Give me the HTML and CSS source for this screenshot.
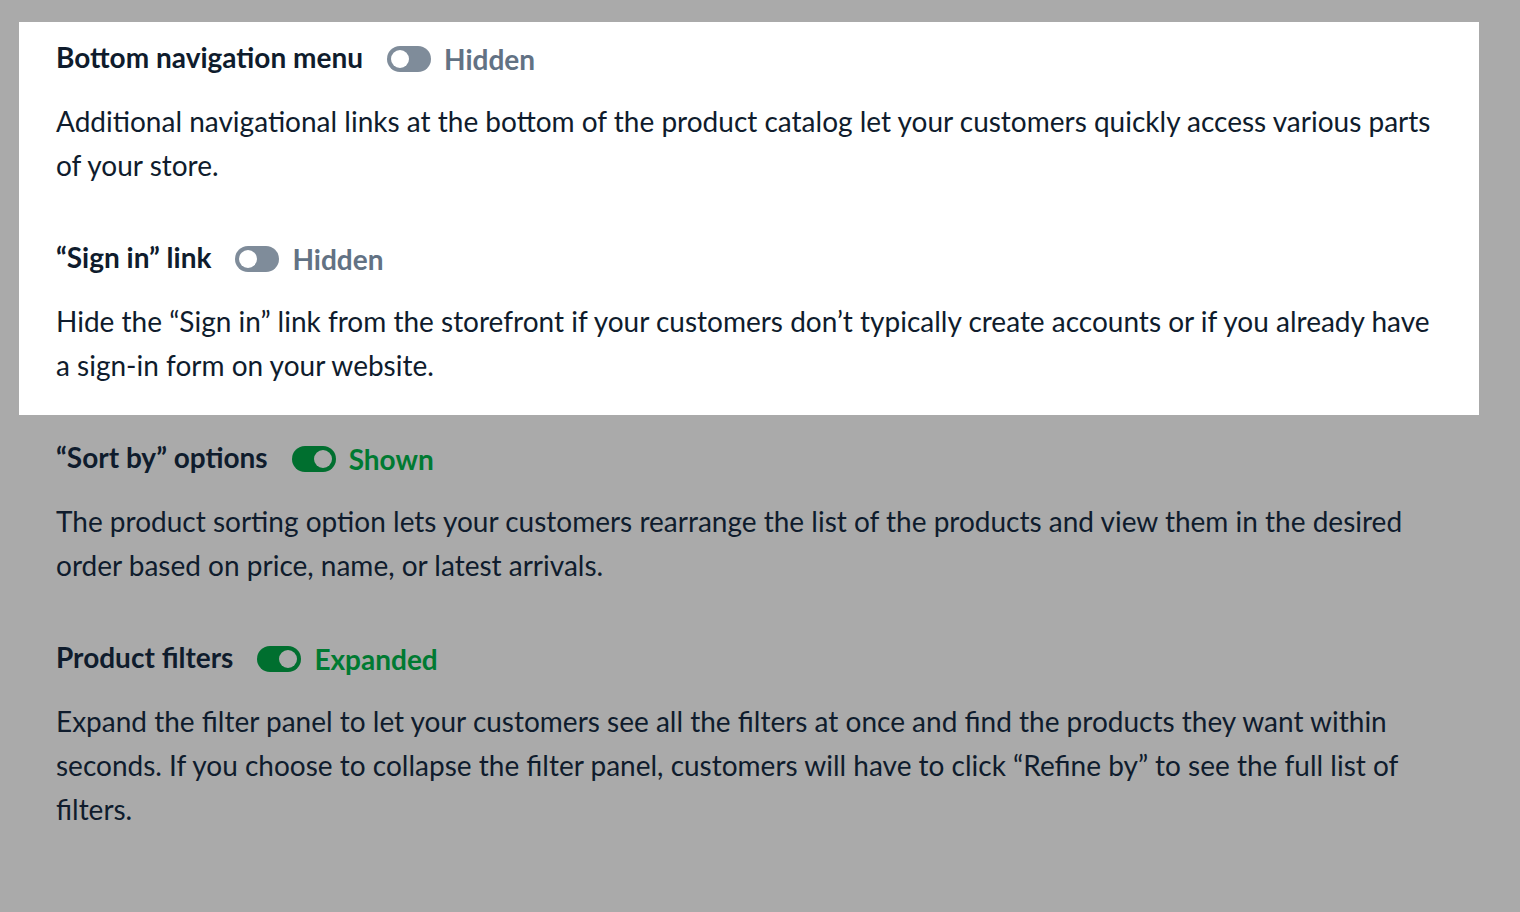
FILE: index.html
```html
<!DOCTYPE html>
<html lang="en">
<head>
    <meta charset="UTF-8">
    <meta name="viewport" content="width=device-width, initial-scale=1.0">
    <title>Storefront settings</title>
    <link rel="stylesheet" href="styles.css">
</head>
<body>
    <div class="page">
        <div class="panel">
            <div class="setting">
                <div class="setting-head">
                    <span class="setting-title">Bottom navigation menu</span>
                    <span class="toggle off"><span class="knob"></span></span>
                    <span class="state off">Hidden</span>
                </div>
                <p class="setting-text">Additional navigational links at the bottom of the product catalog let your customers quickly access various parts of your store.</p>
            </div>
            <div class="setting">
                <div class="setting-head">
                    <span class="setting-title">“Sign in” link</span>
                    <span class="toggle off"><span class="knob"></span></span>
                    <span class="state off">Hidden</span>
                </div>
                <p class="setting-text">Hide the “Sign in” link from the storefront if your customers don’t typically create accounts or if you already have a sign-in form on your website.</p>
            </div>
        </div>
        <div class="dimmed">
            <div class="setting">
                <div class="setting-head">
                    <span class="setting-title">“Sort by” options</span>
                    <span class="toggle on"><span class="knob"></span></span>
                    <span class="state on">Shown</span>
                </div>
                <p class="setting-text">The product sorting option lets your customers rearrange the list of the products and view them in the desired order based on price, name, or latest arrivals.</p>
            </div>
            <div class="setting">
                <div class="setting-head">
                    <span class="setting-title">Product filters</span>
                    <span class="toggle on"><span class="knob"></span></span>
                    <span class="state on">Expanded</span>
                </div>
                <p class="setting-text">Expand the filter panel to let your customers see all the filters at once and find the products they want within seconds. If you choose to collapse the filter panel, customers will have to click “Refine by” to see the full list of filters.</p>
            </div>
        </div>
    </div>
</body>
</html>
```

FILE: styles.css
```css
html, body {
    margin: 0;
    padding: 0;
    background: #aaaaaa;
}
body {
    font-family: Lato, "Noto Sans", sans-serif;
    color: #0f1c2d;
    -webkit-font-smoothing: antialiased;
}
.page {
    padding-top: 22px;
    padding-left: 19px;
    width: 1460px;
}
.panel {
    background: #ffffff;
    padding: 17px 37px 28px 37px;
}
.dimmed {
    padding: 24px 37px 0 37px;
}
.setting + .setting {
    margin-top: 52px;
}
.setting-head {
    display: flex;
    align-items: center;
    height: 36px;
}
.setting-title {
    font-size: 28px;
    font-weight: 700;
    margin-right: 24px;
}
.toggle {
    display: inline-flex;
    align-items: center;
    width: 44px;
    height: 26px;
    border-radius: 13px;
    padding: 0 4px;
    box-sizing: border-box;
    margin-top: 4px;
}
.toggle .knob {
    width: 18px;
    height: 18px;
    border-radius: 50%;
}
.toggle.off {
    background: #7f8c9a;
}
.toggle.off .knob {
    background: #ffffff;
}
.toggle.on {
    background: #006f2f;
    justify-content: flex-end;
}
.toggle.on .knob {
    background: #aaaaaa;
}
.state {
    font-size: 28px;
    font-weight: 700;
    margin-left: 13px;
    margin-top: 4px;
}
.state.off {
    color: #627284;
}
.state.on {
    color: #007a32;
}
.setting-text {
    margin: 24px 0 0;
    font-size: 28px;
    line-height: 44px;
}
```
